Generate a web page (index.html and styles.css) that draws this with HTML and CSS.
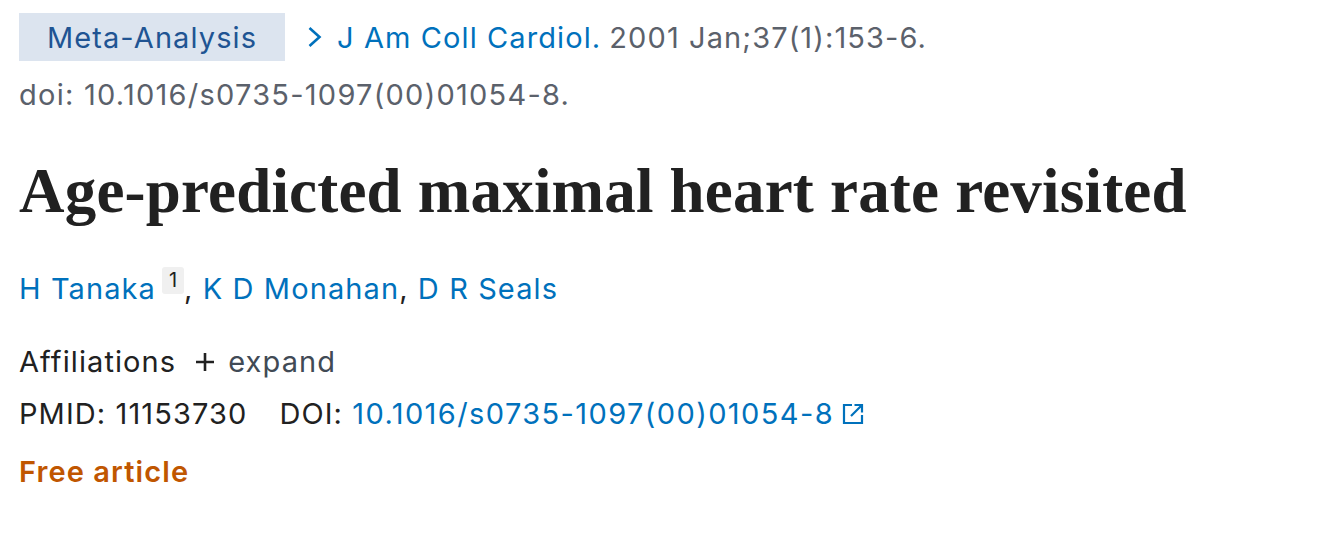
FILE: index.html
```html
<!DOCTYPE html>
<html lang="en">
<head>
<meta charset="utf-8">
<title>Age-predicted maximal heart rate revisited</title>
<link rel="stylesheet" href="styles.css">
</head>
<body>
<main class="article">
  <div class="citation">
    <span class="pubtype">Meta-Analysis</span>
    <span class="journal">
      <svg class="chev" viewBox="0 0 16 22" width="16" height="22"><path d="M2.5 2 L12.5 11 L2.5 20" fill="none" stroke="#0071bc" stroke-width="2.6"/></svg>
      <a href="#" class="link">J Am Coll Cardiol.</a>
      <span class="date">2001 Jan;37(1):153-6.</span>
    </span>
  </div>
  <div class="doi-line">doi: 10.1016/s0735-1097(00)01054-8.</div>
  <h1 class="title">Age-predicted maximal heart rate revisited</h1>
  <div class="authors">
    <a href="#" class="link">H Tanaka</a><sup class="aff-num">1</sup>, <a href="#" class="link">K D Monahan</a>, <a href="#" class="link">D R Seals</a>
  </div>
  <div class="affiliations">
    <span class="aff-label">Affiliations</span>
    <span class="expand"><svg class="plus" viewBox="0 0 18 18" width="18" height="18"><path d="M9 0 V18 M0 9 H18" stroke="#212121" stroke-width="2.6" fill="none"/></svg>expand</span>
  </div>
  <div class="ids">
    <span class="pmid">PMID: 11153730</span>
    <span class="doi">DOI:&nbsp;<a href="#" class="link">10.1016/s0735-1097(00)01054-8</a><svg class="ext" viewBox="0 0 22 22" width="22" height="22"><path d="M10 2 H2 V20 H20 V12" fill="none" stroke="#0071bc" stroke-width="2.2"/><path d="M12.5 2 H20 V9.5 M20 2 L9 13" fill="none" stroke="#0071bc" stroke-width="2.2"/></svg></span>
  </div>
  <div class="free">Free article</div>
</main>
</body>
</html>
```

FILE: styles.css
```css
html, body {
  margin: 0;
  padding: 0;
  background: #ffffff;
}
body {
  font-family: Inter, Roboto, "Liberation Sans", sans-serif;
  font-size: 29px;
  letter-spacing: 1.1px;
  color: #212121;
}
.article {
  padding: 13px 0 0 19px;
  display: flex;
  flex-direction: column;
}
.link {
  color: #0071bc;
  text-decoration: none;
}
.citation {
  display: flex;
  align-items: center;
  height: 48px;
}
.pubtype {
  background: #dce4ef;
  color: #205493;
  height: 48px;
  width: 266px;
  display: flex;
  align-items: center;
  justify-content: center;
  box-sizing: border-box;
}
.journal {
  display: flex;
  align-items: center;
  margin-left: 22px;
}
.chev {
  margin-right: 14px;
}
.date {
  color: #5b616b;
  margin-left: 8px;
}
.doi-line {
  color: #5b616b;
  margin-top: 14px;
  line-height: 40px;
  letter-spacing: 1.25px;
}
.title {
  font-family: "Liberation Serif", serif;
  font-weight: bold;
  font-size: 63px;
  letter-spacing: 0.2px;
  line-height: 72px;
  margin: 40px 0 0 0;
  color: #212121;
}
.authors {
  margin-top: 40px;
  line-height: 40px;
}
.aff-num {
  display: inline-block;
  background: #f0f0f0;
  color: #212121;
  font-size: 20px;
  letter-spacing: 0;
  line-height: 27px;
  width: 22px;
  text-align: center;
  border-radius: 3px;
  vertical-align: 12px;
  margin-left: 6px;
}
.affiliations {
  margin-top: 33px;
  line-height: 40px;
  display: flex;
  align-items: center;
}
.expand {
  color: #414a55;
  margin-left: 20px;
  display: flex;
  align-items: center;
}
.plus {
  margin-right: 14px;
}
.ids {
  margin-top: 12px;
  line-height: 40px;
  display: flex;
  align-items: center;
}
.doi {
  margin-left: 32px;
  display: flex;
  align-items: center;
}
.doi .link {
  letter-spacing: 1.4px;
}
.ext {
  margin-left: 8px;
}
.free {
  margin-top: 18px;
  line-height: 40px;
  color: #c05600;
  font-weight: 600;
}
```
